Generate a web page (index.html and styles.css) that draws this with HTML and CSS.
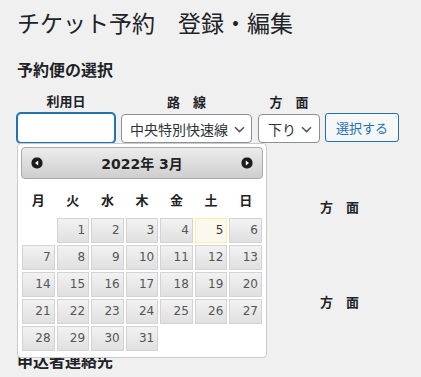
FILE: index.html
```html
<!DOCTYPE html>
<html lang="ja">
<head>
    <meta charset="UTF-8">
    <meta name="viewport" content="width=device-width, initial-scale=1.0">
    <title>チケット予約 登録・編集</title>
    <link rel="stylesheet" href="styles.css">
</head>
<body>
    <div class="wrap">
        <h1>チケット予約　登録・編集</h1>

        <h2>予約便の選択</h2>
        <div class="search-row">
            <div class="field field-date">
                <label>利用日</label>
                <input type="text" class="date-input is-focus">

                <div class="datepicker">
                    <div class="dp-header">
                        <a class="dp-nav">
                            <svg width="12" height="12" viewBox="0 0 12 12"><rect x="0.5" y="0.5" width="11" height="11" rx="5" fill="#1c1c1c"/><path d="M4 6 L7.2 3.6 L7.2 8.4 Z" fill="#fff"/></svg>
                        </a>
                        <div class="dp-title">2022年 3月</div>
                        <a class="dp-nav">
                            <svg width="12" height="12" viewBox="0 0 12 12"><rect x="0.5" y="0.5" width="11" height="11" rx="5" fill="#1c1c1c"/><path d="M8 6 L4.8 3.6 L4.8 8.4 Z" fill="#fff"/></svg>
                        </a>
                    </div>
                    <table class="dp-table">
                        <thead>
                            <tr><th>月</th><th>火</th><th>水</th><th>木</th><th>金</th><th>土</th><th>日</th></tr>
                        </thead>
                        <tbody>
                            <tr><td></td><td><a>1</a></td><td><a>2</a></td><td><a>3</a></td><td><a>4</a></td><td><a class="today">5</a></td><td><a>6</a></td></tr>
                            <tr><td><a>7</a></td><td><a>8</a></td><td><a>9</a></td><td><a>10</a></td><td><a>11</a></td><td><a>12</a></td><td><a>13</a></td></tr>
                            <tr><td><a>14</a></td><td><a>15</a></td><td><a>16</a></td><td><a>17</a></td><td><a>18</a></td><td><a>19</a></td><td><a>20</a></td></tr>
                            <tr><td><a>21</a></td><td><a>22</a></td><td><a>23</a></td><td><a>24</a></td><td><a>25</a></td><td><a>26</a></td><td><a>27</a></td></tr>
                            <tr><td><a>28</a></td><td><a>29</a></td><td><a>30</a></td><td><a>31</a></td><td></td><td></td><td></td></tr>
                        </tbody>
                    </table>
                </div>
            </div>

            <div class="field field-line">
                <label>路　線</label>
                <div class="select">
                    <span>中央特別快速線</span>
                    <svg width="11" height="7" viewBox="0 0 11 7"><path d="M1 1.2 L5.5 5.6 L10 1.2" fill="none" stroke="#50575e" stroke-width="1.5"/></svg>
                </div>
            </div>

            <div class="field field-dir">
                <label>方　面</label>
                <div class="select">
                    <span>下り</span>
                    <svg width="11" height="7" viewBox="0 0 11 7"><path d="M1 1.2 L5.5 5.6 L10 1.2" fill="none" stroke="#50575e" stroke-width="1.5"/></svg>
                </div>
            </div>

            <button class="button">選択する</button>
        </div>

        <!-- rows behind the popup, only the right column shows -->
        <div class="result-row first">
            <div class="result-cell"></div>
            <div class="result-cell"></div>
            <div class="result-cell dir">方　面</div>
        </div>
        <div class="result-row second">
            <div class="result-cell"></div>
            <div class="result-cell"></div>
            <div class="result-cell dir">方　面</div>
        </div>

        <h2 class="contact">申込者連絡先</h2>
    </div>
</body>
</html>
```

FILE: styles.css
```css
body {
    margin: 0;
    background-color: #f0f0f1;
    color: #1d2327;
    font-family: "Noto Sans CJK JP", sans-serif;
    font-size: 13px;
}

.wrap {
    padding: 0 17px;
}

h1 {
    margin: 7px 0 0;
    font-size: 23px;
    font-weight: 400;
    line-height: 30px;
}

h2 {
    margin: 21px 0 0;
    font-size: 16px;
    font-weight: 700;
    line-height: 22px;
}

.search-row {
    display: flex;
    align-items: flex-end;
    margin-top: 12px;
}

.field {
    display: flex;
    flex-direction: column;
}
.field label {
    font-weight: 700;
    line-height: 18px;
    text-align: center;
    margin-bottom: 3px;
}

.field-date {
    width: 98px;
    position: relative;
}
.field-line {
    width: 131px;
    margin-left: 6px;
}
.field-dir {
    width: 62px;
    margin-left: 6px;
}

.date-input {
    box-sizing: border-box;
    width: 98px;
    height: 30px;
    margin: 0;
    border: 1px solid #8c8f94;
    border-radius: 4px;
    background: #fff;
    outline: none;
}
.date-input.is-focus {
    border-color: #2271b1;
    box-shadow: 0 0 0 1px #2271b1;
}

.select {
    box-sizing: border-box;
    height: 29px;
    display: flex;
    align-items: center;
    gap: 6px;
    padding: 0 6px 0 8px;
    border: 1px solid #8c8f94;
    border-radius: 4px;
    background: #fff;
    color: #2c3338;
    font-size: 14px;
    white-space: nowrap;
}
.field-dir .select {
    padding: 0 7px 0 9px;
    gap: 5px;
}
.select svg {
    flex: none;
    margin-top: 1px;
}

.button {
    box-sizing: border-box;
    height: 29px;
    margin: 0 0 1px 5px;
    padding: 0 10px;
    border: 1px solid #2271b1;
    border-radius: 3px;
    background: #f6f7f7;
    color: #2271b1;
    font-family: "Noto Sans CJK JP", sans-serif;
    font-size: 13px;
}

/* datepicker popup */
.datepicker {
    position: absolute;
    top: 100%;
    left: 0;
    z-index: 10;
    box-sizing: border-box;
    width: 250px;
    padding: 3px 3px 0;
    background: #fff;
    border: 1px solid #cbcbcb;
    border-radius: 4px;
    color: #222;
}

.dp-header {
    box-sizing: border-box;
    height: 32px;
    display: flex;
    justify-content: space-between;
    align-items: center;
    padding: 0 9px;
    border: 1px solid #aaa;
    border-radius: 4px;
    background: linear-gradient(#ececec, #cecece);
}
.dp-nav {
    display: flex;
}
.dp-title {
    font-family: "DejaVu Sans", "Noto Sans CJK JP", sans-serif;
    font-size: 14px;
    font-weight: 700;
    color: #222;
}

.dp-table {
    width: 100%;
    margin: 3px 0 5px;
    border-collapse: collapse;
    table-layout: fixed;
}
.dp-table th {
    height: 35px;
    padding: 0;
    font-size: 13px;
    font-weight: 700;
    text-align: center;
}
.dp-table td {
    padding: 1px;
}
.dp-table td a {
    display: block;
    height: 25px;
    box-sizing: border-box;
    padding-right: 3px;
    border: 1px solid #d3d3d3;
    background: linear-gradient(#f2f2f2, #e0e0e0);
    color: #555;
    font-family: "DejaVu Sans", sans-serif;
    font-size: 12px;
    line-height: 23px;
    text-align: right;
}
.dp-table td a.today {
    border-color: #fcefa1;
    background: #fbf9ee;
    color: #363636;
}

/* rows behind the popup */
.result-row {
    display: flex;
    font-weight: 700;
    line-height: 18px;
}
.result-row.first {
    margin-top: 55px;
}
.result-row.second {
    margin-top: 77px;
}
.result-cell {
    width: 120px;
}
.result-cell.dir {
    width: auto;
    margin-left: 63px;
}

.contact {
    margin: 38px 0 0;
}
```
